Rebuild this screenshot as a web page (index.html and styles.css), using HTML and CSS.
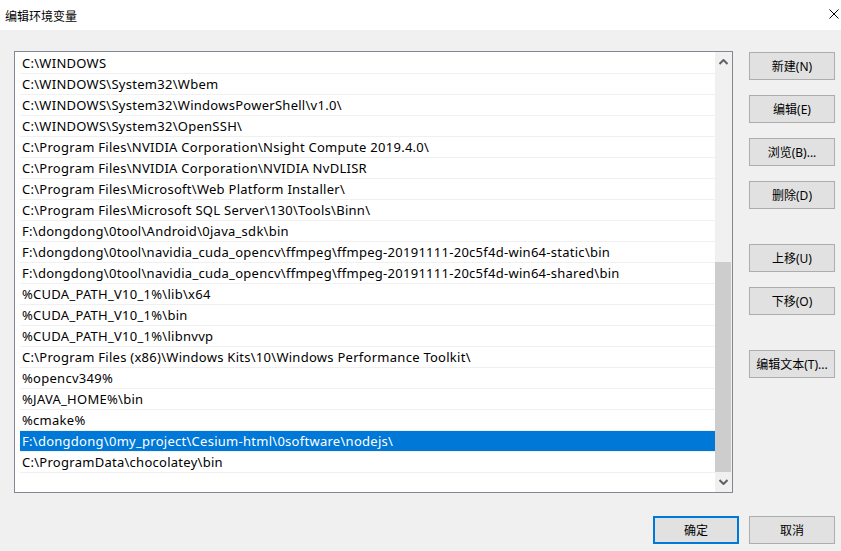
FILE: index.html
```html
<!DOCTYPE html>
<html lang="zh-CN">
<head>
    <meta charset="UTF-8">
    <title>编辑环境变量</title>
    <link rel="stylesheet" href="styles.css">
</head>
<body>
    <div class="window">
        <div class="titlebar">
            <span class="title">编辑环境变量</span>
            <svg class="close" width="10" height="10" viewBox="0 0 10 10">
                <path d="M0.5 0.5 L9.5 9.5 M9.5 0.5 L0.5 9.5" stroke="#000" stroke-width="1" fill="none"/>
            </svg>
        </div>

        <div class="content">
            <div class="list">
                <div class="rows">
                    <div class="row">C:\WINDOWS</div>
                    <div class="row">C:\WINDOWS\System32\Wbem</div>
                    <div class="row">C:\WINDOWS\System32\WindowsPowerShell\v1.0\</div>
                    <div class="row">C:\WINDOWS\System32\OpenSSH\</div>
                    <div class="row">C:\Program Files\NVIDIA Corporation\Nsight Compute 2019.4.0\</div>
                    <div class="row">C:\Program Files\NVIDIA Corporation\NVIDIA NvDLISR</div>
                    <div class="row">C:\Program Files\Microsoft\Web Platform Installer\</div>
                    <div class="row">C:\Program Files\Microsoft SQL Server\130\Tools\Binn\</div>
                    <div class="row">F:\dongdong\0tool\Android\0java_sdk\bin</div>
                    <div class="row">F:\dongdong\0tool\navidia_cuda_opencv\ffmpeg\ffmpeg-20191111-20c5f4d-win64-static\bin</div>
                    <div class="row">F:\dongdong\0tool\navidia_cuda_opencv\ffmpeg\ffmpeg-20191111-20c5f4d-win64-shared\bin</div>
                    <div class="row">%CUDA_PATH_V10_1%\lib\x64</div>
                    <div class="row">%CUDA_PATH_V10_1%\bin</div>
                    <div class="row">%CUDA_PATH_V10_1%\libnvvp</div>
                    <div class="row">C:\Program Files (x86)\Windows Kits\10\Windows Performance Toolkit\</div>
                    <div class="row">%opencv349%</div>
                    <div class="row">%JAVA_HOME%\bin</div>
                    <div class="row">%cmake%</div>
                    <div class="row selected">F:\dongdong\0my_project\Cesium-html\0software\nodejs\</div>
                    <div class="row">C:\ProgramData\chocolatey\bin</div>
                </div>
                <div class="scrollbar">
                    <div class="arrow">
                        <svg width="9" height="6" viewBox="0 0 9 6"><path d="M0.5 5 L4.5 1 L8.5 5" stroke="#606060" stroke-width="2" fill="none"/></svg>
                    </div>
                    <div class="track">
                        <div class="thumb"></div>
                    </div>
                    <div class="arrow">
                        <svg width="9" height="6" viewBox="0 0 9 6"><path d="M0.5 1 L4.5 5 L8.5 1" stroke="#606060" stroke-width="2" fill="none"/></svg>
                    </div>
                </div>
            </div>

            <div class="side">
                <button class="btn">新建(N)</button>
                <button class="btn">编辑(E)</button>
                <button class="btn">浏览(B)...</button>
                <button class="btn">删除(D)</button>
                <button class="btn spaced">上移(U)</button>
                <button class="btn">下移(O)</button>
                <button class="btn spaced">编辑文本(T)...</button>
            </div>
        </div>

        <div class="footer">
            <button class="btn default">确定</button>
            <button class="btn">取消</button>
        </div>
    </div>
</body>
</html>
```

FILE: styles.css
```css
body, html {
    margin: 0;
    padding: 0;
    width: 100%;
    height: 100%;
    overflow: hidden;
    background-color: #f0f0f0;
    font-family: "Noto Sans", "Noto Sans CJK SC", sans-serif;
    font-size: 12px;
    color: #000;
}

.window {
    width: 841px;
    height: 551px;
}

.titlebar {
    height: 30px;
    background-color: #fff;
    display: flex;
    align-items: center;
    justify-content: space-between;
    padding: 0 2px 0 5px;
}

.title {
    font-family: "Noto Sans CJK SC", sans-serif;
    font-size: 12px;
}

.close {
    margin-top: -2px;
}

.content {
    display: flex;
    gap: 16px;
    padding: 21px 6px 0 14px;
}

.list {
    width: 720px;
    height: 442px;
    box-sizing: border-box;
    border: 1px solid #828790;
    background-color: #fff;
    display: flex;
}

.rows {
    flex: 1;
    padding: 1px 0 0 5px;
}

.row {
    height: 20px;
    line-height: 21px;
    padding-left: 2px;
    border-bottom: 1px solid #f0f0f0;
    white-space: nowrap;
    overflow: hidden;
    font-size: 13px;
    letter-spacing: 0.27px;
}

    .row.selected {
        background-color: #0078d7;
        color: #fff;
    }

.scrollbar {
    width: 17px;
    background-color: #f0f0f0;
    display: flex;
    flex-direction: column;
}

.arrow {
    height: 20px;
    display: flex;
    align-items: center;
    justify-content: center;
}

.track {
    flex: 1;
    display: flex;
    flex-direction: column;
    justify-content: flex-end;
}

.thumb {
    height: 210px;
    margin-right: 1px;
    background-color: #cdcdcd;
}

.side {
    display: flex;
    flex-direction: column;
    gap: 15px;
    padding-top: 1px;
}

.btn {
    width: 86px;
    height: 28px;
    box-sizing: border-box;
    background-color: #e1e1e1;
    border: 1px solid #adadad;
    padding: 0;
    font-family: "Noto Sans", "Noto Sans CJK SC", sans-serif;
    font-size: 12px;
    color: #000;
}

    .btn.spaced {
        margin-top: 20px;
    }

    .btn.default {
        border: 2px solid #0078d7;
    }

.footer {
    display: flex;
    justify-content: flex-end;
    gap: 10px;
    padding: 23px 6px 0 0;
}
```
